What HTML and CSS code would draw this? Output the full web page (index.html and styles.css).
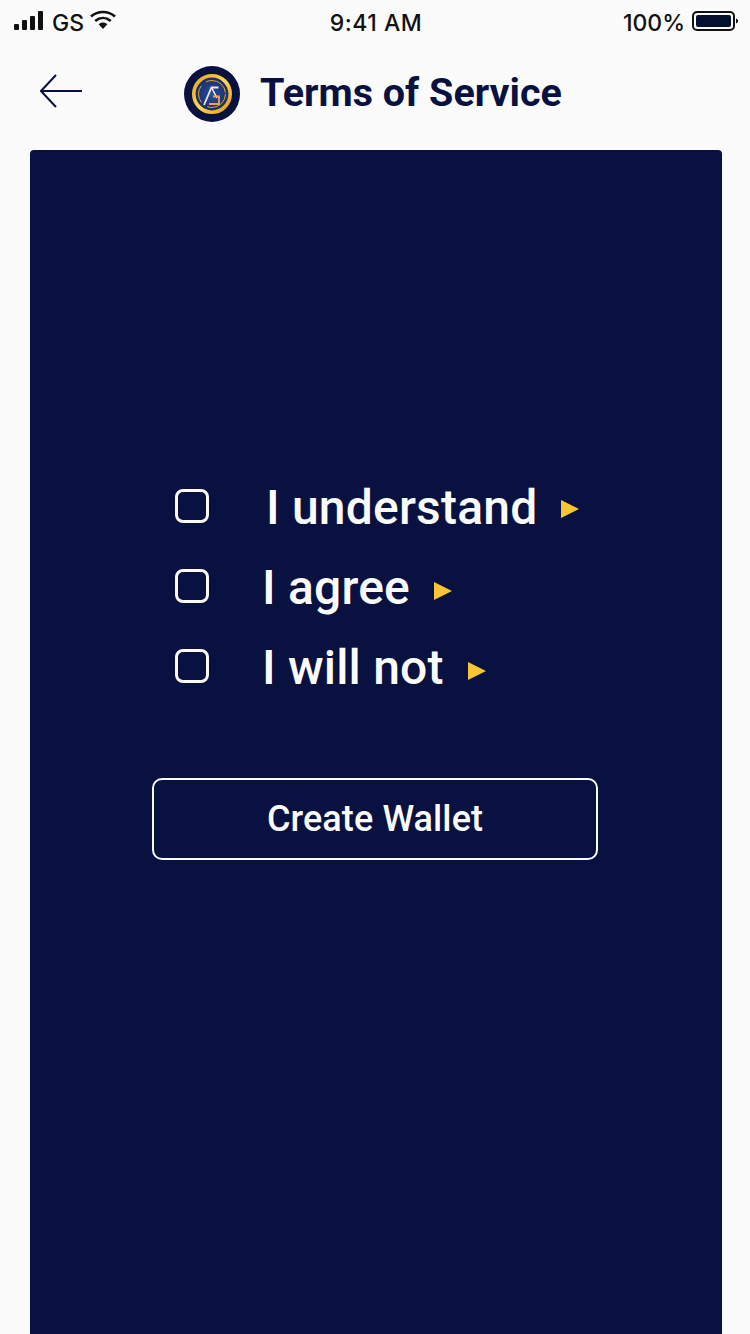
FILE: index.html
```html
<!DOCTYPE html>
<html lang="en">
<head>
<meta charset="utf-8">
<title>Terms of Service</title>
<link rel="stylesheet" href="styles.css">
</head>
<body>
<div class="status">
  <div class="status-left">
    <svg class="signal" width="30" height="20" viewBox="0 0 30 20"><rect x="0" y="13" width="5" height="6" rx="1"/><rect x="8" y="9" width="5" height="10" rx="1"/><rect x="16" y="5" width="5" height="14" rx="1"/><rect x="24" y="0" width="5" height="19" rx="1"/></svg>
    <span class="carrier">GS</span>
    <svg class="wifi" width="26" height="20" viewBox="0 0 26 20"><path d="M1 6.5C8 .5 18 .5 25 6.5" fill="none" stroke="#111" stroke-width="2.6"/><path d="M5.2 11C10 7 16 7 20.8 11" fill="none" stroke="#111" stroke-width="2.6"/><path d="M8.6 14.2C11.5 11.8 14.5 11.8 17.4 14.2L13 19Z" fill="#111"/></svg>
  </div>
  <span class="clock">9:41 AM</span>
  <div class="status-right">
    <span class="percent">100%</span>
    <svg class="battery" width="46" height="20" viewBox="0 0 46 20"><rect x="1" y="1" width="41" height="18" rx="4" fill="none" stroke="#111" stroke-width="2"/><rect x="4" y="4" width="35" height="12" rx="2" fill="#04102e"/><path d="M44 7.5L46 9V11L44 12.5Z" fill="#111"/></svg>
  </div>
</div>
<header class="topbar">
  <svg class="back" width="44" height="36" viewBox="0 0 44 36"><path d="M16 2L1 18L16 34M1 18H42" fill="none" stroke="#091140" stroke-width="2"/></svg>
  <svg class="logo" width="56" height="56" viewBox="0 0 56 56">
    <defs>
      <linearGradient id="gold" x1="0" y1="0" x2="1" y2="1"><stop offset="0" stop-color="#e8a317"/><stop offset=".5" stop-color="#ffd84d"/><stop offset="1" stop-color="#e89a12"/></linearGradient>
      <radialGradient id="face"><stop offset="0" stop-color="#2a4f9e"/><stop offset="1" stop-color="#16296b"/></radialGradient>
    </defs>
    <circle cx="28" cy="28" r="28" fill="#091140"/>
    <circle cx="28" cy="28" r="18.200" fill="url(#face)" stroke="url(#gold)" stroke-width="3.600"/>
    <circle cx="28" cy="28" r="13.500" fill="none" stroke="#e8a317" stroke-width="1" stroke-dasharray="26 7 18 6"/>
    <path d="M20 39L27.500 21.500H34.500" fill="none" stroke="#f0e6d8" stroke-width="1.800"/>
    <path d="M27.500 21.500L33 32" fill="none" stroke="#f4f4f4" stroke-width="1.500"/>
    <path d="M29 30.500H35V38H25" fill="none" stroke="#eaa45a" stroke-width="1.800"/>
  </svg>
  <h1 class="title">Terms of Service</h1>
</header>
<main class="card">
  <ul class="terms">
    <li class="term term-first"><span class="box"></span><span class="label">I understand</span><span class="arrow"></span></li>
    <li class="term"><span class="box"></span><span class="label">I agree</span><span class="arrow"></span></li>
    <li class="term"><span class="box"></span><span class="label">I will not</span><span class="arrow"></span></li>
  </ul>
  <button class="create" type="button">Create Wallet</button>
</main>
</body>
</html>
```
FILE: styles.css
```css
* {
  box-sizing: border-box;
}

html,
body {
  margin: 0;
  height: 1334px;
  overflow: hidden;
}

body {
  background: #fbfbfb;
  font-family: Roboto, sans-serif;
  display: flex;
  flex-direction: column;
}

.status {
  height: 44px;
  flex: none;
  padding: 2px 12px 0 14px;
  display: grid;
  grid-template-columns: 1fr auto 1fr;
  align-items: center;
  color: #111;
  font-family: Inter, sans-serif;
  font-size: 23px;
  font-weight: 500;
}

.status-left {
  display: flex;
  align-items: center;
}

.signal {
  fill: #111;
  margin-top: -5px;
}

.carrier {
  margin-left: 8px;
}

.wifi {
  margin-left: 6px;
  margin-top: -7px;
}

.clock {
  letter-spacing: 0.5px;
}

.status-right {
  display: flex;
  justify-content: flex-end;
  align-items: center;
  gap: 7px;
}

.battery {
  margin-top: -5px;
}

.topbar {
  height: 106px;
  flex: none;
  padding: 0 0 6px 40px;
  display: flex;
  align-items: center;
}

.back {
  margin-top: -6px;
}

.logo {
  margin-left: 100px;
}

.title {
  margin: -4px 0 0 20px;
  font-size: 39.5px;
  font-weight: 700;
  color: #091140;
}

.card {
  flex: 1;
  margin: 0 28px 0 30px;
  background: #091140;
  border-radius: 4px 4px 0 0;
  padding: 339px 0 0 122px;
  display: flex;
  flex-direction: column;
  align-items: flex-start;
}

.terms {
  list-style: none;
  margin: 0;
  padding: 0 0 0 23px;
  display: flex;
  flex-direction: column;
  gap: 46px;
}

.term {
  height: 34px;
  display: flex;
  align-items: center;
  color: #fbfbfb;
}

.box {
  width: 34px;
  height: 34px;
  border: 3px solid #fbfbfb;
  border-radius: 8px;
}

.label {
  margin: 3px 0 0 53px;
  font-size: 48px;
  font-weight: 500;
  letter-spacing: 0.2px;
  line-height: 34px;
}

.term-first .label {
  margin-left: 57px;
}

.arrow {
  margin: 10px 0 0 24px;
  border-left: 18px solid #f8c534;
  border-top: 9.500px solid transparent;
  border-bottom: 9.500px solid transparent;
}

.term-first .arrow {
  margin-top: 6px;
}

.create {
  width: 446px;
  height: 82px;
  margin-top: 95px;
  background: transparent;
  border: 2px solid #fbfbfb;
  border-radius: 10px;
  color: #fbfbfb;
  font-family: Roboto, sans-serif;
  font-size: 36px;
  font-weight: 500;
  letter-spacing: 0.1px;
}
```
